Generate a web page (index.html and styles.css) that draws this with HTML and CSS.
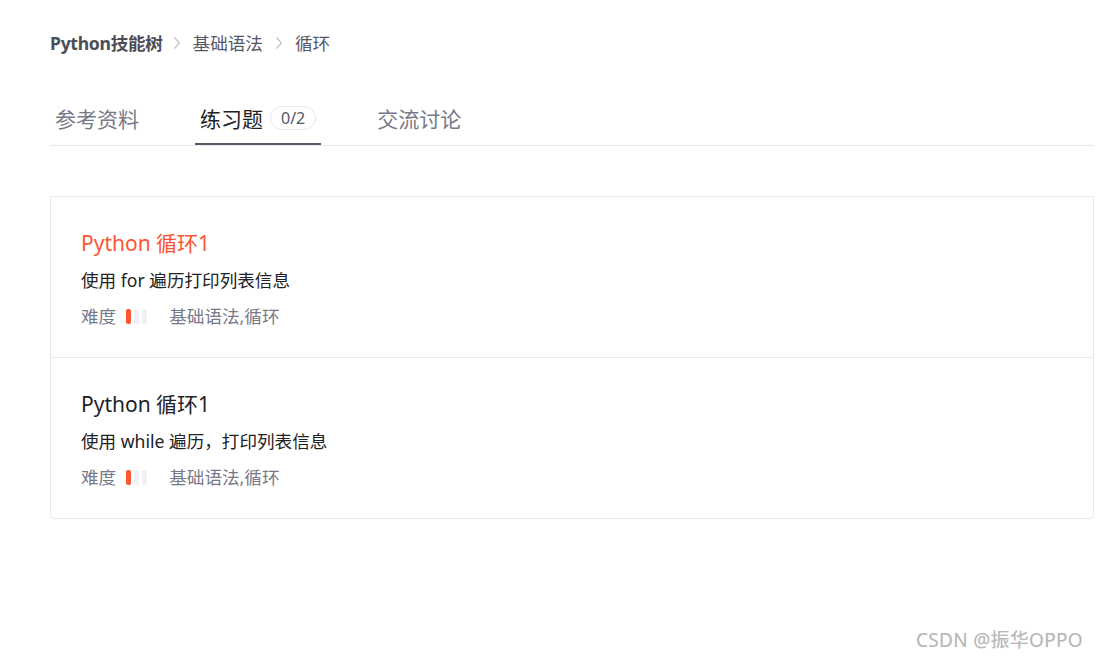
FILE: index.html
```html
<!DOCTYPE html>
<html lang="zh-CN">
<head>
<meta charset="utf-8">
<title>循环 - Python技能树</title>
<link rel="stylesheet" href="styles.css">
</head>
<body>
<div class="page">
  <nav class="crumbs">
    <a class="crumb crumb-root">Python技能树</a>
    <svg class="sep sep-first" width="8" height="14" viewBox="0 0 8 14"><path d="M1.5 1.5 L6.5 7 L1.5 12.5" fill="none" stroke="#c4c4cc" stroke-width="1.3"/></svg>
    <a class="crumb">基础语法</a>
    <svg class="sep" width="8" height="14" viewBox="0 0 8 14"><path d="M1.5 1.5 L6.5 7 L1.5 12.5" fill="none" stroke="#c4c4cc" stroke-width="1.3"/></svg>
    <a class="crumb">循环</a>
  </nav>

  <div class="tabs">
    <div class="tab">参考资料</div>
    <div class="tab active">练习题<span class="badge">0/2</span></div>
    <div class="tab">交流讨论</div>
  </div>

  <div class="list">
    <div class="item">
      <div class="item-title hot">Python 循环1</div>
      <div class="item-desc">使用 for 遍历打印列表信息</div>
      <div class="item-meta">
        <span>难度</span>
        <span class="level"><i class="on"></i><i></i><i></i></span>
        <span class="tags">基础语法,循环</span>
      </div>
    </div>
    <div class="item">
      <div class="item-title">Python 循环1</div>
      <div class="item-desc">使用 while 遍历，打印列表信息</div>
      <div class="item-meta">
        <span>难度</span>
        <span class="level"><i class="on"></i><i></i><i></i></span>
        <span class="tags">基础语法,循环</span>
      </div>
    </div>
  </div>
</div>
<div class="watermark">CSDN @振华OPPO</div>
</body>
</html>
```
FILE: styles.css
```css
html, body {
  margin: 0;
  padding: 0;
  background: #fff;
}

body {
  font-family: "Noto Sans", "Noto Sans CJK SC", sans-serif;
  color: #222226;
  width: 1097px;
  height: 659px;
  overflow: hidden;
  position: relative;
}

.page {
  padding: 30px 3px 0 50px;
}

/* breadcrumb */
.crumbs {
  display: flex;
  align-items: center;
  height: 26px;
  font-size: 17.6px;
  line-height: 26px;
}

.crumb {
  color: #555666;
}

.crumb-root {
  font-weight: 700;
  color: #4d4d55;
  letter-spacing: -0.3px;
}

.sep {
  margin: 0 12px 0 12px;
}

.sep.sep-first {
  margin-left: 10px;
}

/* tabs */
.tabs {
  display: flex;
  margin-top: 37px;
  border-bottom: 1px solid #e8e8ed;
  height: 52px;
}

.tab {
  display: flex;
  align-items: center;
  height: 50px;
  padding: 0 5px;
  margin-right: 51px;
  font-size: 21px;
  color: #777888;
  border-bottom: 2px solid transparent;
}

.tab.active {
  color: #222226;
  border-bottom-color: #555666;
}

.badge {
  display: inline-flex;
  align-items: center;
  height: 22px;
  margin-left: 7px;
  padding: 0 10px;
  border: 1px solid #e8e8ed;
  border-radius: 12px;
  font-size: 16px;
  color: #555666;
}

/* exercise list */
.list {
  margin-top: 50px;
  border: 1px solid #e8e8ed;
  border-radius: 0 0 4px 4px;
}

.item {
  padding: 32px 30px 29px 30px;
}

.item + .item {
  border-top: 1px solid #e8e8ed;
}

.item-title {
  font-size: 21px;
  line-height: 28px;
  color: #222226;
}

.item-title.hot {
  color: #fc5531;
}

.item-desc {
  margin-top: 11px;
  font-size: 17.6px;
  line-height: 24px;
  color: #222226;
}

.item-meta {
  display: flex;
  align-items: center;
  margin-top: 12px;
  font-size: 17.6px;
  line-height: 24px;
  color: #777888;
}

.level {
  display: flex;
  gap: 3px;
  margin: 0 22px 0 10px;
}

.level i {
  display: block;
  width: 5px;
  height: 15px;
  border-radius: 2px;
  background: #f0f0f5;
}

.level i.on {
  background: #fc5531;
}

/* watermark overlay */
.watermark {
  position: absolute;
  right: 14px;
  bottom: 6px;
  font-size: 19px;
  line-height: 26px;
  color: #b8b8b8;
  text-shadow: 0 0 1px rgba(0, 0, 0, 0.12);
  letter-spacing: 0.3px;
}
```
